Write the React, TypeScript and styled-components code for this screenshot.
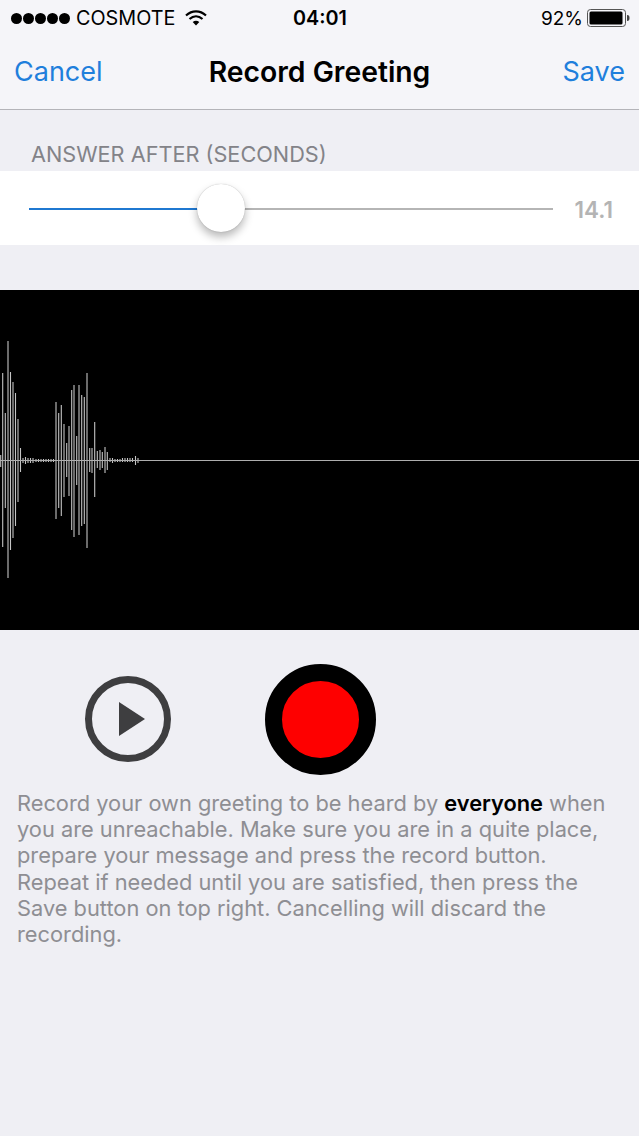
import React from "react";
import styled, { createGlobalStyle } from "styled-components";

const Global = createGlobalStyle`
  html, body { margin: 0; padding: 0; background: #efeff4; }
  body { font-family: "Inter", "Liberation Sans", sans-serif; }
`;

const Page = styled.div`
  width: 639px;
  height: 1136px;
  overflow: hidden;
  background: #efeff4;
  display: flex;
  flex-direction: column;
`;

const Header = styled.header`
  height: 109px;
  background: #f5f5f9;
  border-bottom: 1px solid #b4b4b9;
  display: flex;
  flex-direction: column;
`;

const StatusBar = styled.div`
  height: 36px;
  display: grid;
  grid-template-columns: 1fr auto 1fr;
  align-items: center;
  padding: 0 8px 0 11px;
  color: #000;
  font-size: 19.8px;
`;

const StatusLeft = styled.div`
  display: flex;
  align-items: center;
`;

const Dots = styled.div`
  display: flex;
  gap: 1px;
  margin-right: 6px;
`;

const Dot = styled.span`
  width: 11px;
  height: 11px;
  border-radius: 50%;
  background: #000;
`;

const Carrier = styled.span`
  margin-right: 10px;
`;

const Clock = styled.span`
  font-weight: 600;
  margin-right: 2px;
`;

const StatusRight = styled.div`
  display: flex;
  align-items: center;
  justify-content: flex-end;
  gap: 4px;
`;

const Percent = styled.span`
  font-size: 19px;
`;

const NavBar = styled.nav`
  flex: 1;
  display: grid;
  grid-template-columns: 1fr auto 1fr;
  align-items: center;
  padding: 0 14px 2px 14px;
`;

const NavAction = styled.span<{ $end?: boolean }>`
  color: #1f7fdc;
  font-size: 27px;
  text-align: ${(p) => (p.$end ? "right" : "left")};
`;

const Title = styled.h1`
  margin: 0;
  font-size: 28.3px;
  font-weight: 600;
  color: #000;
`;

const SectionLabel = styled.div`
  height: 61px;
  box-sizing: border-box;
  padding: 32px 0 0 31px;
  font-size: 21.7px;
  line-height: 24px;
  color: #838388;
`;

const SliderRow = styled.div`
  height: 74px;
  background: #fff;
  display: flex;
  align-items: center;
  padding: 0 26px 0 29px;
  gap: 22px;
`;

const Track = styled.div`
  position: relative;
  flex: 1;
  height: 2px;
  margin-top: 2px;
  background: #b5b5b5;
`;

const TrackFill = styled.div`
  height: 100%;
  background: #1f78d1;
`;

const Thumb = styled.div`
  position: absolute;
  top: calc(50% - 1px);
  width: 48px;
  height: 48px;
  border-radius: 50%;
  background: #fff;
  transform: translate(-50%, -50%);
  box-shadow: 0 0 1px rgba(0, 0, 0, 0.3), 0 5px 8px rgba(0, 0, 0, 0.28);
`;

const SliderValue = styled.span`
  font-size: 22.5px;
  font-weight: 600;
  color: #b4b4b4;
  margin-top: 2px;
`;

const Wave = styled.div`
  margin-top: 45px;
  height: 340px;
  background: #000;
`;

const WaveSvg = styled.svg`
  display: block;
`;

const Controls = styled.div`
  display: flex;
  align-items: center;
  height: 178px;
  padding-left: 85px;
  gap: 94px;
`;

const PlayButton = styled.button`
  width: 86px;
  height: 86px;
  box-sizing: border-box;
  border: 7px solid #3e3e40;
  border-radius: 50%;
  background: transparent;
  padding: 0 0 0 7px;
  display: flex;
  align-items: center;
  justify-content: center;
`;

const RecordButton = styled.button`
  width: 111px;
  height: 111px;
  box-sizing: border-box;
  border: 17px solid #000;
  border-radius: 50%;
  background: #fe0000;
  padding: 0;
`;

const Help = styled.p`
  margin: -18px 0 0;
  padding: 0 30px 0 17px;
  font-size: 21.8px;
  line-height: 26.2px;
  color: #8e8e93;
`;

const Strong = styled.strong`
  color: #000;
  font-weight: 600;
`;

const bars: [number, number, number][] = [
  [0.7, 455, 467], [2.7, 373, 547], [5.3, 413, 508], [8, 341, 578], [10.5, 372, 550],
  [13, 382, 538], [15.5, 393, 526], [18, 419, 502], [20.5, 448, 472],
  [23, 458, 463], [25.5, 457, 464], [28, 458, 463], [30.5, 458, 463], [33, 458, 463],
  [36, 459, 462], [38.5, 459, 462], [41, 459, 462], [43.5, 459, 462], [46, 459, 462], [48.5, 459, 462], [51, 459, 462], [53.5, 459, 462],
  [56, 402, 519], [58.7, 413, 508], [61.3, 405, 516], [64, 424, 497], [66.7, 443, 477],
  [69, 426, 496], [71.7, 390, 530], [74, 385, 537], [76.7, 436, 485], [79, 385, 535],
  [81.7, 395, 526], [84.3, 397, 524], [87, 373, 548], [89.7, 448, 472], [92, 448, 473],
  [94.7, 422, 497], [97.3, 451, 468], [100, 450, 470], [102.3, 452, 468], [105, 447, 473],
  [107.3, 452, 470], [110, 458, 462], [112.5, 458, 463], [115, 459, 462], [117.5, 459, 462], [120, 459, 462], [122.5, 458, 462],
  [125, 458, 462], [127.5, 458, 462], [130, 458, 462], [132.5, 458, 462], [135.5, 456, 465], [138, 458, 463],
];

export default function App() {
  return (
    <Page>
      <Global />
      <Header>
        <StatusBar>
          <StatusLeft>
            <Dots>
              {[0, 1, 2, 3, 4].map((i) => (
                <Dot key={i} />
              ))}
            </Dots>
            <Carrier>COSMOTE</Carrier>
            <svg width="22" height="16" viewBox="0 0 22 16">
              <path d="M1 5.500C7 0 15 0 21 5.500" fill="none" stroke="#000" strokeWidth="2.200" />
              <path d="M4.500 9C8.500 5.500 13.500 5.500 17.500 9" fill="none" stroke="#000" strokeWidth="2.200" />
              <path d="M7.700 12C9.700 10.400 12.300 10.400 14.300 12L11 15.500Z" fill="#000" />
            </svg>
          </StatusLeft>
          <Clock>04:01</Clock>
          <StatusRight>
            <Percent>92%</Percent>
            <svg width="44" height="18" viewBox="0 0 44 18">
              <rect x="0.5" y="0.5" width="38" height="17" rx="3" fill="none" stroke="#555" />
              <rect x="2.5" y="2.5" width="33" height="13" rx="1.5" fill="#000" />
              <path d="M40 6c2 0 2.500 1 2.500 3s-.5 3-2.500 3z" fill="#444" />
            </svg>
          </StatusRight>
        </StatusBar>
        <NavBar>
          <NavAction>Cancel</NavAction>
          <Title>Record Greeting</Title>
          <NavAction $end>Save</NavAction>
        </NavBar>
      </Header>
      <SectionLabel>ANSWER AFTER (SECONDS)</SectionLabel>
      <SliderRow>
        <Track>
          <TrackFill style={{ width: "32.8%" }} />
          <Thumb style={{ left: "36.7%" }} />
        </Track>
        <SliderValue>14.1</SliderValue>
      </SliderRow>
      <Wave>
        <WaveSvg width="639" height="340" viewBox="0 290 639 340">
          {bars.map(([x, a, b]) => (
            <line key={x} x1={x} x2={x} y1={a} y2={b} stroke="#c4c4c4" strokeWidth="1.1" />
          ))}
          <line x1="0" x2="639" y1="460.5" y2="460.5" stroke="#aeaeae" strokeWidth="1" />
        </WaveSvg>
      </Wave>
      <Controls>
        <PlayButton aria-label="Play">
          <svg width="26" height="34" viewBox="0 0 26 34">
            <path d="M0 0L26 17L0 34Z" fill="#3e3e40" />
          </svg>
        </PlayButton>
        <RecordButton aria-label="Record" />
      </Controls>
      <Help>
        Record your own greeting to be heard by <Strong>everyone</Strong> when you are unreachable. Make sure you are in a quite place, prepare your message and press the record button. Repeat if needed until you are satisfied, then press the Save button on top right. Cancelling will discard the recording.
      </Help>
    </Page>
  );
}
